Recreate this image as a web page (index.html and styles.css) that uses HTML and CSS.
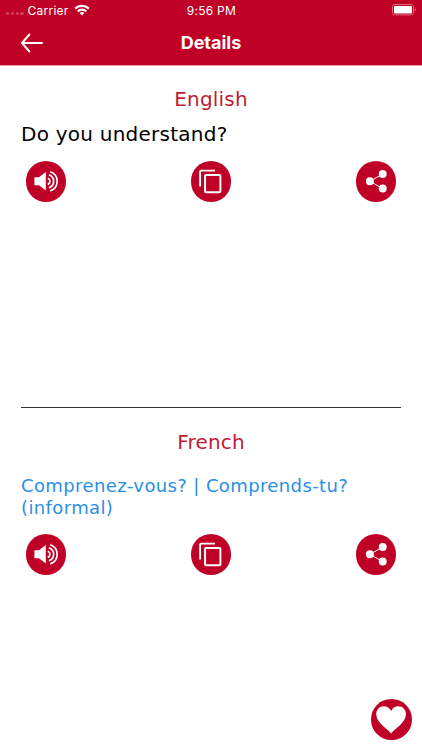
FILE: index.html
```html
<!DOCTYPE html>
<html lang="en">
<head>
  <meta charset="UTF-8">
  <title>Details</title>
  <meta name="viewport" content="width=device-width, initial-scale=1.0">
  <link rel="stylesheet" href="styles.css">
</head>
<body>

  <!-- Shared icon shapes -->
  <svg class="sprite" width="0" height="0">
    <symbol id="speaker" viewBox="0 0 41 41">
      <path fill="#fff" d="M8.5 16.4h4.6l6.9-5.2v18.6l-6.9-5.2H8.5z"/>
      <path fill="none" stroke="#fff" stroke-width="1.7" d="M22 17.4a3.3 3.3 0 0 1 0 6.2M23.1 14a6.8 6.8 0 0 1 0 13M24.4 10.8a10.2 10.2 0 0 1 0 19.4"/>
    </symbol>
    <symbol id="copy" viewBox="0 0 41 41">
      <path fill="none" stroke="#fff" stroke-width="1.9" d="M9.2 25.7V10.7a1 1 0 0 1 1-1h14"/>
      <rect x="14.2" y="14.1" width="15.5" height="17.4" rx="1" fill="none" stroke="#fff" stroke-width="2"/>
    </symbol>
    <symbol id="share" viewBox="0 0 41 41">
      <path fill="none" stroke="#fff" stroke-width="1" d="M27 13.2l-13 7.3 13 7.3"/>
      <g fill="#fff">
        <circle cx="14" cy="20.5" r="4"/>
        <circle cx="27" cy="13.2" r="4"/>
        <circle cx="27" cy="27.8" r="4"/>
      </g>
    </symbol>
  </svg>

  <header>
    <div class="status-bar">
      <div class="carrier">
        <span class="dots"><i></i><i></i><i></i><i></i></span>
        <span>Carrier</span>
        <svg class="wifi" width="16" height="12" viewBox="0 0 16 12">
          <path fill="none" stroke="#fff" stroke-width="2.2" d="M1.2 4.6a9.7 9.7 0 0 1 13.6 0M3.8 7.4a6 6 0 0 1 8.4 0"/>
          <path fill="#fff" d="M5.6 9.1a3.4 3.4 0 0 1 4.8 0L8 11.5z"/>
        </svg>
      </div>
      <div class="time">9:56 PM</div>
      <svg class="battery" width="25" height="12" viewBox="0 0 25 12">
        <rect x=".5" y=".5" width="21" height="10.4" rx="2.6" fill="none" stroke="#e0687f"/>
        <rect x="2" y="2" width="18" height="7.4" rx="1.2" fill="#fff"/>
        <path fill="#e0687f" d="M22.8 4c1.6.6 1.6 2.8 0 3.4z"/>
      </svg>
    </div>
    <div class="nav-bar">
      <svg class="back" width="24" height="20" viewBox="0 0 24 20">
        <path fill="none" stroke="#fff" stroke-width="2.1" stroke-linecap="round" stroke-linejoin="round" d="M22 10H2M9.3 1.6L2 10l7.3 8.4"/>
      </svg>
      <h1>Details</h1>
    </div>
  </header>

  <main>
    <section class="english">
      <h2>English</h2>
      <p class="phrase">Do you understand?</p>
      <div class="actions">
        <button aria-label="Listen"><svg><use href="#speaker"/></svg></button>
        <button aria-label="Copy"><svg><use href="#copy"/></svg></button>
        <button aria-label="Share"><svg><use href="#share"/></svg></button>
      </div>
    </section>

    <section class="french">
      <h2>French</h2>
      <p class="translation">Comprenez-vous? | Comprends-tu? (informal)</p>
      <div class="actions">
        <button aria-label="Listen"><svg><use href="#speaker"/></svg></button>
        <button aria-label="Copy"><svg><use href="#copy"/></svg></button>
        <button aria-label="Share"><svg><use href="#share"/></svg></button>
      </div>
    </section>
  </main>

  <button class="favorite" aria-label="Favorite">
    <svg viewBox="0 0 41 41">
      <path fill="#fff" d="M20.3 34.8C17.2 30.2 5.3 24.4 5.3 15.4c0-4.6 3.4-8 7.6-8 3.3 0 6.1 1.8 7.4 4.8 1.3-3 4.1-4.8 7.4-4.8 4.2 0 7.6 3.4 7.6 8 0 9-11.9 14.8-15 19.4z"/>
    </svg>
  </button>

</body>
</html>
```

FILE: styles.css
```css
body {
  margin: 0;
  height: 750px;
  font-family: 'DejaVu Sans', Verdana, sans-serif;
  background-color: #fff;
  color: #000;
  overflow: hidden;
}

.sprite {
  position: absolute;
}

header {
  height: 66px;
  box-sizing: border-box;
  background-color: #bf0027;
  border-bottom: 1px solid #ec9aaa;
  color: #fff;
  font-family: Inter, sans-serif;
}

.status-bar {
  display: grid;
  grid-template-columns: 1fr auto 1fr;
  align-items: center;
  height: 20px;
  padding: 0 5px 0 6px;
  font-size: 12px;
  letter-spacing: 0.25px;
}

.carrier {
  display: flex;
  align-items: center;
}

.dots {
  display: flex;
  gap: 1.6px;
  margin: 7px 4px 0 0;
}

.dots i {
  width: 3.2px;
  height: 3px;
  border-radius: 50%;
  background-color: #d0405c;
}

.wifi {
  margin-left: 5px;
}

.battery {
  justify-self: end;
}

.nav-bar {
  display: grid;
  grid-template-columns: 1fr auto 1fr;
  align-items: center;
  height: 45px;
}

.back {
  margin-left: 20px;
}

h1 {
  margin: 0;
  font-size: 18px;
  font-weight: 700;
  line-height: 22px;
}

main {
  padding: 0 21px;
}

h2 {
  margin: 0;
  font-size: 20px;
  font-weight: 400;
  letter-spacing: 0.2px;
  line-height: 24px;
  text-align: center;
  color: #c01c33;
}

p {
  margin: 0;
}

.english {
  height: 342px;
  box-sizing: border-box;
  padding-top: 21px;
  border-bottom: 1px solid #333;
}

.phrase {
  margin-top: 11px;
  font-size: 20px;
  letter-spacing: 0.24px;
  line-height: 24px;
}

.french {
  padding-top: 22px;
}

.translation {
  margin-top: 21px;
  font-size: 18px;
  letter-spacing: 0.38px;
  line-height: 22px;
  color: #2a8fe8;
}

.actions {
  display: flex;
  justify-content: space-between;
  padding: 15px 4.8px 0;
}

button {
  width: 40.6px;
  height: 40.6px;
  padding: 0;
  border: none;
  border-radius: 50%;
  background-color: #bf0027;
}

button svg {
  display: block;
  width: 100%;
  height: 100%;
}

/* Floats over the page content */
.favorite {
  position: absolute;
  right: 10.4px;
  bottom: 10.4px;
}
```
